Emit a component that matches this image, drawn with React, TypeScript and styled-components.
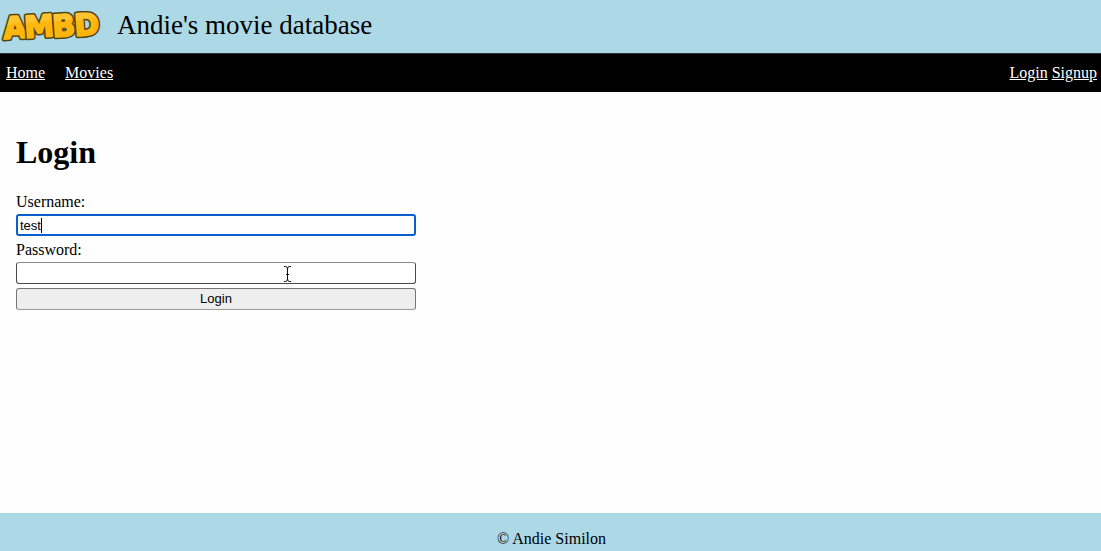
import React from "react";
import styled, { createGlobalStyle } from "styled-components";

const GlobalStyle = createGlobalStyle`
  *, *::before, *::after { box-sizing: border-box; }
  body {
    margin: 0;
    background: #fefefe;
    color: #000;
    font: 16px/18px "Liberation Serif", "Times New Roman", serif;
  }
`;

const Page = styled.div`
  display: flex;
  flex-direction: column;
  min-height: 100vh;
`;

const Header = styled.header`
  display: flex;
  align-items: center;
  gap: 13px;
  height: 53px;
  background: #add8e6;
`;

const Logo = styled.svg`
  display: block;
  flex: none;
`;

const SiteName = styled.p`
  margin: 0;
  padding-bottom: 4px;
  font-size: 27px;
  line-height: 32px;
`;

const Nav = styled.nav`
  display: flex;
  justify-content: space-between;
  padding: 10px 4px 10px 6px;
  border-top: 1px solid #2b363a;
  background: #000;
`;

const NavGroup = styled.div<{ $gap: number }>`
  display: flex;
  gap: ${(p) => p.$gap}px;
`;

const NavLink = styled.a`
  color: #fff;
`;

const Main = styled.main`
  flex: 1;
  padding: 42px 16px 16px;
`;

const Title = styled.h1`
  margin: 0 0 22px;
  font-size: 32px;
  line-height: 36px;
`;

const Form = styled.form`
  display: flex;
  flex-direction: column;
  gap: 4px;
  max-width: 400px;
`;

const Field = styled.div`
  display: flex;
  flex-direction: column;
  gap: 2px;
`;

const Label = styled.label`
  line-height: 20px;
`;

const Control = styled.div`
  position: relative;
  display: flex;
`;

const TextBox = styled.input`
  width: 100%;
  height: 22px;
  padding: 1px 3px;
  border: 1px solid #4a4a4a;
  border-top-color: #8a8a8a;
  border-radius: 3px;
  background: #fff;
  color: #000;
  font: 13px "Liberation Sans", Arial, sans-serif;

  &:focus {
    padding: 0 2px;
    border: 2px solid #0a5fce;
    outline: none;
    caret-color: transparent;
  }
`;

const Caret = styled.span`
  position: absolute;
  top: 4px;
  left: 25px;
  width: 1px;
  height: 15px;
  background: #000;
`;

const Pointer = styled.svg`
  position: absolute;
  top: 4px;
  left: 267px;
  pointer-events: none;
`;

const SubmitButton = styled.button`
  height: 22px;
  padding: 0 6px 2px;
  border: 1px solid #767676;
  border-bottom-color: #9a9a9a;
  border-radius: 3px;
  background: #eee;
  color: #000;
  font: 13px "Liberation Sans", Arial, sans-serif;
`;

const Footer = styled.footer`
  padding: 17px 0 3px 2px;
  background: #add8e6;
  text-align: center;
`;

const letters = [
  { char: "A", x: 4, y: 39 },
  { char: "M", x: 25, y: 38 },
  { char: "B", x: 53, y: 37 },
  { char: "D", x: 75, y: 36 },
];

function AmbdLogo() {
  return (
    <Logo width="104" height="53" viewBox="0 0 104 53" role="img" aria-label="AMBD">
      <defs>
        <linearGradient id="gold" gradientUnits="userSpaceOnUse" x1="0" y1="12" x2="2" y2="42">
          <stop offset="0" stopColor="#ffc83c" />
          <stop offset="0.42" stopColor="#ffc22c" />
          <stop offset="0.48" stopColor="#ffb80f" />
          <stop offset="1" stopColor="#fdb40c" />
        </linearGradient>
      </defs>
      <g
        fontFamily="'DejaVu Sans', sans-serif"
        fontWeight="bold"
        fontSize="30"
        strokeLinejoin="round"
      >
        {letters.map((l) => (
          <g key={l.char} transform={`rotate(-4 ${l.x} ${l.y})`}>
            <text x={l.x} y={l.y} fill="#4d4413" stroke="#4d4413" strokeWidth="5">
              {l.char}
            </text>
            <text x={l.x} y={l.y} fill="url(#gold)" stroke="url(#gold)" strokeWidth="2" aria-hidden="true">
              {l.char}
            </text>
          </g>
        ))}
      </g>
    </Logo>
  );
}

export default function App() {
  return (
    <>
      <GlobalStyle />
      <Page>
        <Header>
          <AmbdLogo />
          <SiteName>Andie's movie database</SiteName>
        </Header>
        <Nav>
          <NavGroup $gap={20}>
            <NavLink href="#home">Home</NavLink>
            <NavLink href="#movies">Movies</NavLink>
          </NavGroup>
          <NavGroup $gap={4}>
            <NavLink href="#login">Login</NavLink>
            <NavLink href="#signup">Signup</NavLink>
          </NavGroup>
        </Nav>
        <Main>
          <Title>Login</Title>
          <Form onSubmit={(e) => e.preventDefault()}>
            <Field>
              <Label htmlFor="username">Username:</Label>
              <Control>
                <TextBox id="username" type="text" defaultValue="test" autoFocus />
                <Caret />
              </Control>
            </Field>
            <Field>
              <Label htmlFor="password">Password:</Label>
              <Control>
                <TextBox id="password" type="password" />
                <Pointer width="9" height="16" viewBox="0 0 9 16" fill="none" stroke="#111" aria-hidden="true">
                  <path d="M1 .5H2.5Q4.5 .5 4.5 3V13Q4.5 15.5 2.5 15.5H1M8 .5H6.5Q4.5 .5 4.5 3M4.5 13Q4.5 15.5 6.5 15.5H8M3 8.5H6" />
                </Pointer>
              </Control>
            </Field>
            <SubmitButton type="submit">Login</SubmitButton>
          </Form>
        </Main>
        <Footer>© Andie Similon</Footer>
      </Page>
    </>
  );
}
